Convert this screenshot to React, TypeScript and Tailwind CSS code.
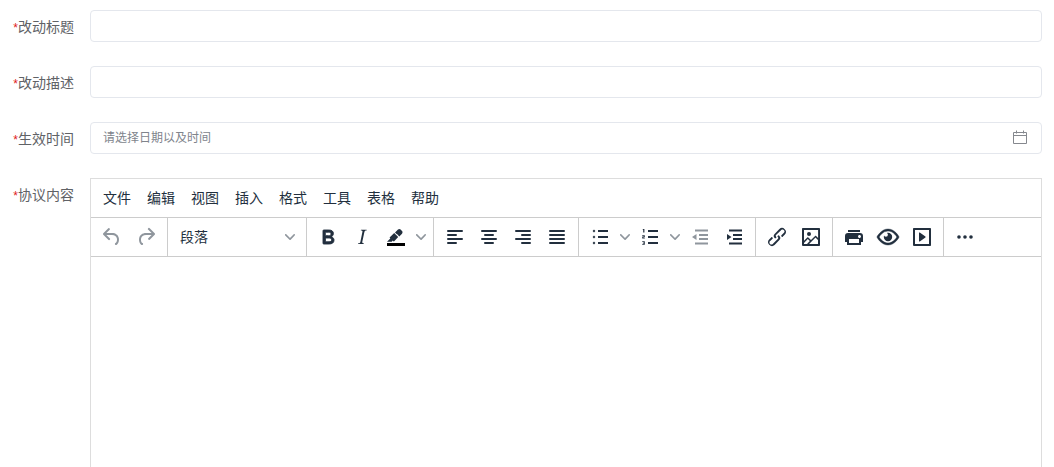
import type { ReactNode } from "react";

const MENUS = ["文件", "编辑", "视图", "插入", "格式", "工具", "表格", "帮助"];

const ICONS: Record<string, ReactNode> = {
  undo: <path d="M6.4 8H12c3.7 0 6.2 2 6.8 5.1.6 2.7-.4 5.6-2.3 6.8a1 1 0 0 1-1-1.8c1.1-.6 1.8-2.7 1.4-4.6-.5-2.1-2.1-3.5-4.9-3.5H6.4l3.3 3.3a1 1 0 1 1-1.4 1.4l-5-5a1 1 0 0 1 0-1.4l5-5a1 1 0 0 1 1.4 1.4L6.4 8z" />,
  redo: <path d="M17.6 10H12c-2.8 0-4.4 1.4-4.9 3.5-.4 2 .3 4 1.4 4.6a1 1 0 1 1-1 1.8c-2-1.2-2.9-4.1-2.3-6.8.6-3 3-5.1 6.8-5.1h5.6l-3.3-3.3a1 1 0 1 1 1.4-1.4l5 5a1 1 0 0 1 0 1.4l-5 5a1 1 0 0 1-1.4-1.4l3.3-3.3z" />,
  bold: <path stroke="#222f3e" strokeWidth="0.9" d="M7.8 19c-.3 0-.5 0-.6-.2l-.2-.5V5.7c0-.2 0-.4.2-.5l.6-.2h5c1.5 0 2.7.3 3.5 1 .7.6 1.1 1.4 1.1 2.5a3 3 0 0 1-.6 1.9c-.4.6-1 1-1.6 1.2.4.1.9.3 1.3.6s.8.7 1 1.2c.4.4.5 1 .5 1.6 0 1.3-.4 2.3-1.3 3-.8.7-2.1 1-3.8 1H7.8zm5-8.3c.6 0 1.2-.1 1.6-.5.4-.3.6-.7.6-1.3 0-1.1-.8-1.7-2.3-1.7H9.3v3.5h3.4zm.5 6c.7 0 1.3-.1 1.7-.4.4-.4.6-.9.6-1.5s-.2-1-.7-1.4c-.4-.3-1-.4-2-.4H9.4v3.8h4z" />,
  italic: <path d="M16.7 4.7l-.1.9h-.3c-.6 0-1 0-1.4.3-.3.3-.4.6-.5 1.1l-2.1 9.8v.6c0 .5.4.8 1.4.8h.2l-.2.8H8l.2-.8h.2c1.1 0 1.8-.5 2-1.5l2-9.8.1-.5c0-.6-.4-.8-1.4-.8h-.3l.2-.9h5.8z" />,
  highlight: (
    <>
      <path fill="#000" d="M3 18h18v3H3z" />
      <path d="M7.7 16.7H3l3.3-3.3-.7-.8L10.2 8l4 4.1-4 4.2c-.2.2-.6.2-.8 0l-.6-.7-1.1 1.1zm5-7.5L11 7.4l3-2.9a2 2 0 0 1 2.6 0L18 6c.7.7.7 2 0 2.7l-2.7 2.7-2.6-2.6z" />
    </>
  ),
  alignLeft: <path d="M5 5h14a1 1 0 0 1 0 2H5a1 1 0 1 1 0-2zm0 4h8a1 1 0 0 1 0 2H5a1 1 0 1 1 0-2zm0 8h8a1 1 0 0 1 0 2H5a1 1 0 0 1 0-2zm0-4h14a1 1 0 0 1 0 2H5a1 1 0 0 1 0-2z" />,
  alignCenter: <path d="M5 5h14a1 1 0 0 1 0 2H5a1 1 0 1 1 0-2zm3 4h8a1 1 0 0 1 0 2H8a1 1 0 1 1 0-2zm0 8h8a1 1 0 0 1 0 2H8a1 1 0 0 1 0-2zm-3-4h14a1 1 0 0 1 0 2H5a1 1 0 0 1 0-2z" />,
  alignRight: <path d="M5 5h14a1 1 0 0 1 0 2H5a1 1 0 1 1 0-2zm6 4h8a1 1 0 0 1 0 2h-8a1 1 0 0 1 0-2zm0 8h8a1 1 0 0 1 0 2h-8a1 1 0 0 1 0-2zm-6-4h14a1 1 0 0 1 0 2H5a1 1 0 0 1 0-2z" />,
  justify: <path d="M5 5h14a1 1 0 0 1 0 2H5a1 1 0 1 1 0-2zm0 4h14a1 1 0 0 1 0 2H5a1 1 0 1 1 0-2zm0 4h14a1 1 0 0 1 0 2H5a1 1 0 0 1 0-2zm0 4h14a1 1 0 0 1 0 2H5a1 1 0 0 1 0-2z" />,
  bullist: (
    <path d="M10 5h10v2H10zM10 11h10v2H10zM10 17h10v2H10zM6 4.6L7.4 6 6 7.4 4.6 6zM6 10.6L7.4 12 6 13.4 4.6 12zM6 16.6L7.4 18 6 19.4 4.6 18z" />
  ),
  numlist: (
    <path d="M10 5h10v2H10zM10 11h10v2H10zM10 17h10v2H10zM5.2 4h1.2v3.6H5.2V5h-.7zM4.2 10.2h2.6v2H5.4v.6h1.4v.8H4.2v-2.1h1.5v-.6H4.2zM4.2 16.2h2.6v3.6H4.2V19h1.5v-.5H4.8v-.7h.9v-.8H4.2z" />
  ),
  outdent: <path d="M7 4.5h13v2H7zM11 9h9v2h-9zM11 13h9v2h-9zM7 17.5h13v2H7zM8.5 9v6L4 12z" />,
  indent: <path d="M7 4.5h13v2H7zM11 9h9v2h-9zM11 13h9v2h-9zM7 17.5h13v2H7zM5 9v6l4.5-3z" />,
  link: <path d="M6.2 12.3a1 1 0 0 1 1.4 1.4l-2.1 2.1a2 2 0 1 0 2.7 2.7l4.8-4.8a1 1 0 0 0 0-1.4 1 1 0 1 1 1.4-1.3 2.9 2.9 0 0 1 0 4L9.6 20a3.9 3.9 0 0 1-5.5-5.5l2-2zm11.6-.6a1 1 0 0 1-1.4-1.4l2-2a2 2 0 1 0-2.6-2.8L11 10a1 1 0 0 0 0 1.4A1 1 0 1 1 9.6 13a2.9 2.9 0 0 1 0-4L14.4 4a3.9 3.9 0 0 1 5.5 5.5l-2 2z" />,
  image: <path fillRule="evenodd" d="M5 15.7l3.3-3.2c.3-.3.7-.3 1 0L12 15l4.1-4c.3-.4.8-.4 1 0l2 1.9V5H5v10.7zM5 18v1h3l2.8-2.9-2-2L5 17.9zm14-3l-2.5-2.4-6.4 6.5H19v-4zM4 3h16c.6 0 1 .4 1 1v16c0 .6-.4 1-1 1H4a1 1 0 0 1-1-1V4c0-.6.4-1 1-1zm6 8a2 2 0 1 0 0-4 2 2 0 0 0 0 4z" />,
  print: <path d="M18 8H6a3 3 0 0 0-3 3v6h2v3h14v-3h2v-6a3 3 0 0 0-3-3zm-1 10H7v-4h10v4zm.5-5c-.8 0-1.5-.7-1.5-1.5s.7-1.5 1.5-1.5 1.5.7 1.5 1.5-.7 1.5-1.5 1.5zm.5-8H6v2h12V5z" />,
  preview: (
    <>
      <path stroke="#222f3e" strokeWidth="0.4" d="M3.5 12.5c.5.8 1.1 1.6 1.8 2.3 2 2 4.2 3.2 6.7 3.2s4.7-1.2 6.7-3.2a16.2 16.2 0 0 0 2.1-2.8 15.7 15.7 0 0 0-2.1-2.8c-2-2-4.2-3.2-6.7-3.2a9.3 9.3 0 0 0-6.7 3.2A16.2 16.2 0 0 0 3.2 12c0 .2.2.3.3.5zm-2.4-1l.7-1.2L4 7.8C6.2 5.4 8.9 4 12 4c3 0 5.8 1.4 8.1 3.8a18.2 18.2 0 0 1 2.8 3.7v1l-.7 1.2-2.1 2.5c-2.3 2.4-5 3.8-8.1 3.8-3 0-5.8-1.4-8.1-3.8a18.2 18.2 0 0 1-2.8-3.7 1 1 0 0 1 0-1z" />
      <path d="M12 7.8a4.2 4.2 0 1 1-4.2 4.2c0-.5.1-1 .3-1.4.3.8 1 1.2 1.8 1.2a2 2 0 0 0 2-2c0-.8-.4-1.5-1-1.8.3 0 .7-.2 1.1-.2z" />
    </>
  ),
  media: <path fillRule="evenodd" d="M4 3h16c.6 0 1 .4 1 1v16c0 .6-.4 1-1 1H4a1 1 0 0 1-1-1V4c0-.6.4-1 1-1zm1 2v14h14V5H5zm4.8 2.6l5.6 4a.5.5 0 0 1 0 .8l-5.6 4A.5.5 0 0 1 9 16V8a.5.5 0 0 1 .8-.4z" />,
  more: <path d="M6 10.2a1.8 1.8 0 1 0 0 3.6 1.8 1.8 0 0 0 0-3.6zm12 0a1.8 1.8 0 1 0 0 3.6 1.8 1.8 0 0 0 0-3.6zm-6 0a1.8 1.8 0 1 0 0 3.6 1.8 1.8 0 0 0 0-3.6z" />,
};

function Chevron() {
  return (
    <svg width="10" height="10" viewBox="0 0 10 10" className="fill-[#222f3e] opacity-50">
      <path d="M8.7 2.2c.3-.3.8-.3 1 0 .4.4.4.9 0 1.2L5.7 7.8c-.3.3-.9.3-1.2 0L.2 3.4a.8.8 0 0 1 0-1.2c.3-.3.8-.3 1.1 0L5 6l3.7-3.8z" />
    </svg>
  );
}

function Btn({ name, dim, caret }: { name: string; dim?: boolean; caret?: boolean }) {
  return (
    <>
      <span className="flex h-[34px] w-[34px] items-center justify-center">
        <svg width="24" height="24" viewBox="0 0 24 24" className={dim ? "fill-[#222f3e] opacity-50" : "fill-[#222f3e]"}>
          {ICONS[name]}
        </svg>
      </span>
      {caret && (
        <span className="flex h-[34px] w-4 items-center justify-center">
          <Chevron />
        </span>
      )}
    </>
  );
}

function Group({ children, last }: { children: ReactNode; last?: boolean }) {
  return <div className={`flex items-center px-1 ${last ? "" : "border-r border-[#ccc]"}`}>{children}</div>;
}

function Field({ label, children }: { label: string; children: ReactNode }) {
  return (
    <div className="flex items-start">
      <label className="h-8 w-[90px] shrink-0 pr-4 text-right text-sm leading-8 text-[#606266]">
        <span className="font-['Liberation_Sans'] text-xs text-[#e02020]">*</span>
        {label}
      </label>
      {children}
    </div>
  );
}

function TextInput({ children }: { children?: ReactNode }) {
  return (
    <div className="flex h-8 flex-1 items-center justify-between rounded border border-[#e4e7ed] bg-white pb-0.5 pl-3 pr-[14px]">
      {children}
    </div>
  );
}

export default function App() {
  return (
    <div className="flex h-[467px] flex-col gap-6 overflow-hidden bg-white pr-3 pt-2.5 font-['Noto_Sans_CJK_SC','Noto_Sans',sans-serif]">
      <Field label="改动标题">
        <TextInput />
      </Field>
      <Field label="改动描述">
        <TextInput />
      </Field>
      <Field label="生效时间">
        <TextInput>
          <span className="text-xs text-[#80848c]">请选择日期以及时间</span>
          <svg width="14" height="14" viewBox="0 0 14 14" fill="none" className="stroke-[#85888e]">
            <path d="M.5 2.5h13v11H.5zM.5 5.5h13M3.5.5v3M10.5.5v3" />
          </svg>
        </TextInput>
      </Field>
      <Field label="协议内容">
        <div className="h-[400px] flex-1 border border-[#ddd]">
          <div className="flex h-[39px] items-center gap-4 border-b border-[#ccc] pb-0.5 pl-3 text-sm text-[#222f3e]">
            {MENUS.map((m) => (
              <span key={m}>{m}</span>
            ))}
          </div>
          <div className="flex h-[39px] items-stretch border-b border-[#ccc]">
            <Group>
              <Btn name="undo" dim />
              <Btn name="redo" dim />
            </Group>
            <Group>
              <div className="flex w-[130px] items-center justify-between pb-0.5 pl-2 pr-[7px] text-sm text-[#222f3e]">
                <span>段落</span>
                <span className="pt-0.5 leading-none">
                  <Chevron />
                </span>
              </div>
            </Group>
            <Group>
              <Btn name="bold" />
              <Btn name="italic" />
              <Btn name="highlight" caret />
            </Group>
            <Group>
              <Btn name="alignLeft" />
              <Btn name="alignCenter" />
              <Btn name="alignRight" />
              <Btn name="justify" />
            </Group>
            <Group>
              <Btn name="bullist" caret />
              <Btn name="numlist" caret />
              <Btn name="outdent" dim />
              <Btn name="indent" />
            </Group>
            <Group>
              <Btn name="link" />
              <Btn name="image" />
            </Group>
            <Group>
              <Btn name="print" />
              <Btn name="preview" />
              <Btn name="media" />
            </Group>
            <Group last>
              <Btn name="more" />
            </Group>
          </div>
        </div>
      </Field>
    </div>
  );
}
